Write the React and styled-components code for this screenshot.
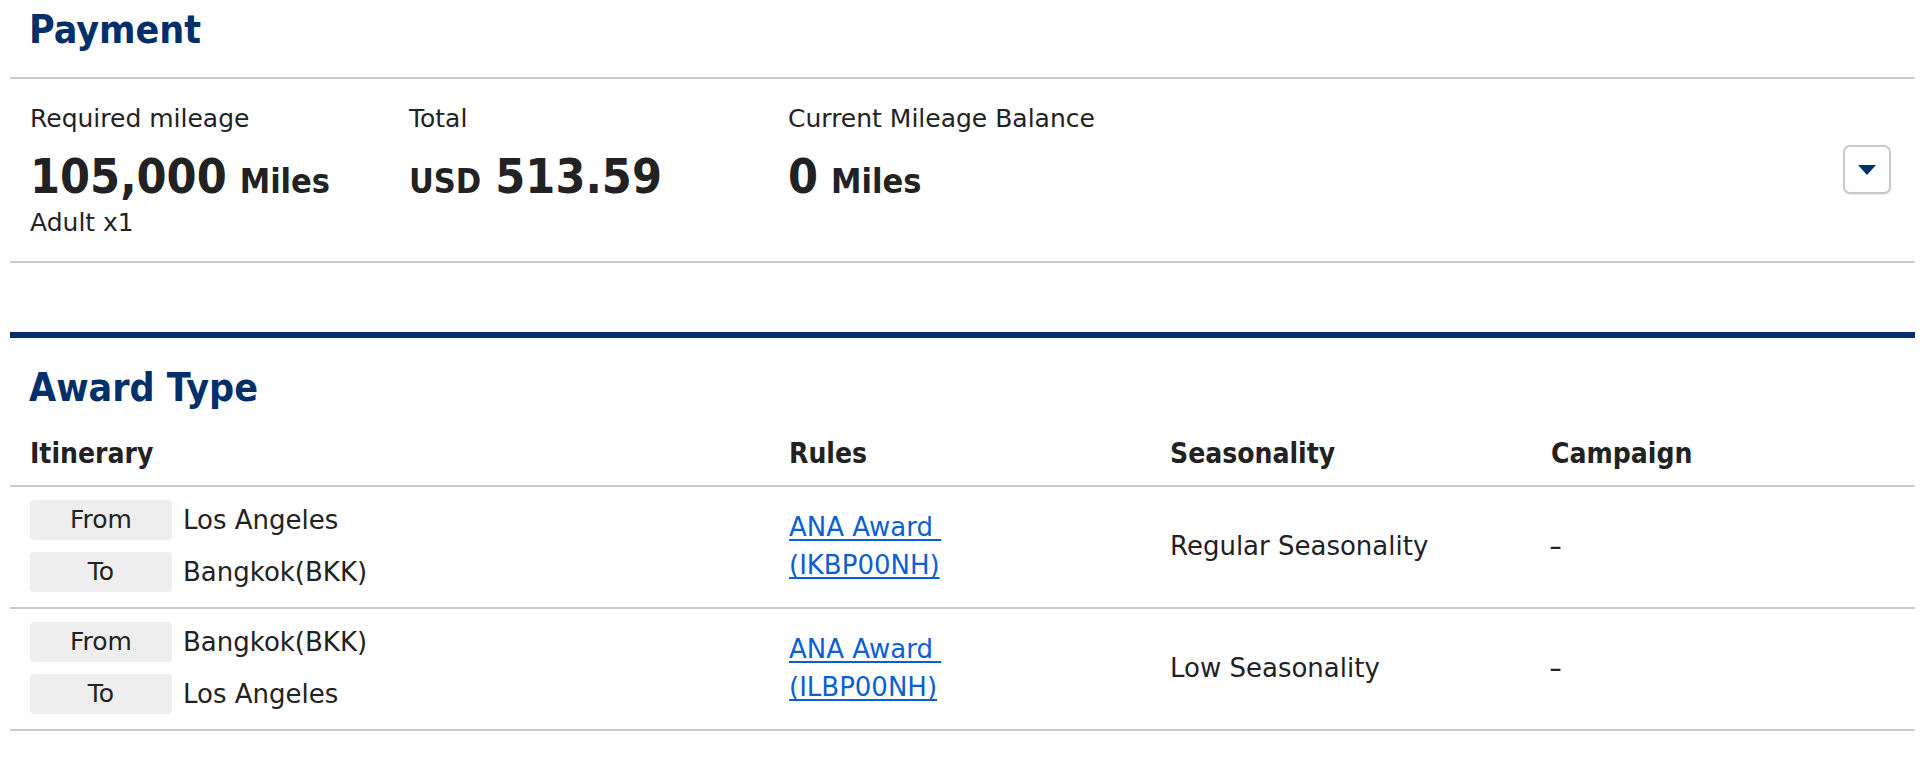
import React from "react";
import styled, { createGlobalStyle } from "styled-components";

const GlobalStyle = createGlobalStyle`
  html, body {
    margin: 0;
    padding: 0;
    background: #ffffff;
  }
  body {
    font-family: "DejaVu Sans", "Liberation Sans", sans-serif;
    color: #222222;
  }
  * { box-sizing: border-box; }
`;

const NAVY = "#00306a";
const BOLD = `"DejaVu Sans Condensed", "DejaVu Sans", "Liberation Sans", sans-serif`;

const Page = styled.div`
  width: 1905px;
  margin-left: 10px;
`;

const SectionTitle = styled.h2`
  margin: 0;
  padding: ${(p) => (p.$top ? `${p.$top}px` : "0")} 0 0 19px;
  font-family: ${BOLD};
  font-stretch: condensed;
  font-weight: 700;
  font-size: 39px;
  line-height: 56px;
  color: ${NAVY};
`;

const PaymentSection = styled.section`
  padding-top: 2px;
`;

const PaymentBox = styled.div`
  margin-top: 19px;
  border-top: 2px solid #cccccc;
  border-bottom: 2px solid #cccccc;
  display: flex;
  align-items: center;
  padding: 24px 24px 22px 0;
`;

const PayColumns = styled.div`
  display: grid;
  grid-template-columns: 379px 379px 381px;
  flex: 1;
`;

const PayCol = styled.div`
  padding-left: 20px;
`;

const PayLabel = styled.div`
  margin-top: ${(p) => (p.$sub ? "3px" : "0")};
  font-size: 25px;
  line-height: 32px;
  color: #222222;
`;

const PayValue = styled.div`
  margin-top: 13px;
  font-family: ${BOLD};
  font-stretch: condensed;
  font-weight: 700;
  font-size: 48px;
  line-height: 56px;
  color: #222222;
  white-space: nowrap;
`;

const Unit = styled.span`
  font-size: 34px;
  line-height: 1;
  margin: ${(p) => (p.$before ? "0 14px 0 0" : "0 0 0 13px")};
`;

const ToggleButton = styled.button`
  width: 48px;
  height: 49px;
  margin-top: -3px;
  border: 2px solid #c9c9c9;
  border-radius: 7px;
  background: #ffffff;
  display: flex;
  align-items: center;
  justify-content: center;
  padding: 0;
  cursor: pointer;
  box-shadow: 0 1px 1px rgba(0, 0, 0, 0.08);
`;

const AwardSection = styled.section`
  margin-top: 69px;
  border-top: 6px solid ${NAVY};
`;

const Table = styled.div`
  display: grid;
  grid-template-columns: 759px 381px 381px 384px;
`;

const HeadCell = styled.div`
  padding: 18px 0 11px 20px;
  font-family: ${BOLD};
  font-stretch: condensed;
  font-weight: 700;
  font-size: 28px;
  line-height: 40px;
  color: #222222;
  border-bottom: 2px solid #cccccc;
`;

const Cell = styled.div`
  padding: 13px 0 15px 20px;
  border-bottom: 2px solid #cccccc;
  display: flex;
  align-items: center;
  font-size: 26px;
  line-height: 38px;
  color: #222222;
`;

const Legs = styled.div`
  display: flex;
  flex-direction: column;
  gap: 12px;
`;

const Leg = styled.div`
  display: flex;
  align-items: center;
  gap: 11px;
`;

const Badge = styled.span`
  width: 142px;
  height: 40px;
  border-radius: 4px;
  background: #eeeeee;
  font-size: 25px;
  line-height: 40px;
  text-align: center;
  color: #222222;
`;

const City = styled.span`
  font-size: 26px;
  line-height: 40px;
`;

const RuleLink = styled.a`
  color: #0a5fd6;
  text-decoration: underline;
  text-underline-offset: 3px;
  text-decoration-thickness: 2px;
  font-size: 26px;
  line-height: 38px;
`;

const Dash = styled.span`
  display: inline-block;
  transform: scaleX(1.4);
`;

const Caret = () => (
  <svg width="18" height="10" viewBox="0 0 18 10" aria-hidden="true">
    <path d="M0 0 H18 L9 10 Z" fill={NAVY} />
  </svg>
);

const rows = [
  {
    from: "Los Angeles",
    to: "Bangkok(BKK)",
    code: "(IKBP00NH)",
    season: "Regular Seasonality",
  },
  {
    from: "Bangkok(BKK)",
    to: "Los Angeles",
    code: "(ILBP00NH)",
    season: "Low Seasonality",
  },
];

export default function App() {
  return (
    <>
      <GlobalStyle />
      <Page>
        <PaymentSection>
          <SectionTitle>Payment</SectionTitle>
          <PaymentBox>
            <PayColumns>
              <PayCol>
                <PayLabel>Required mileage</PayLabel>
                <PayValue>
                  105,000<Unit>Miles</Unit>
                </PayValue>
                <PayLabel $sub>Adult x1</PayLabel>
              </PayCol>
              <PayCol>
                <PayLabel>Total</PayLabel>
                <PayValue>
                  <Unit $before>USD</Unit>513.59
                </PayValue>
                <PayLabel $sub>&nbsp;</PayLabel>
              </PayCol>
              <PayCol>
                <PayLabel>Current Mileage Balance</PayLabel>
                <PayValue>
                  0<Unit>Miles</Unit>
                </PayValue>
                <PayLabel $sub>&nbsp;</PayLabel>
              </PayCol>
            </PayColumns>
            <ToggleButton aria-label="Show details">
              <Caret />
            </ToggleButton>
          </PaymentBox>
        </PaymentSection>

        <AwardSection>
          <SectionTitle $top={22}>Award Type</SectionTitle>
          <Table>
            <HeadCell>Itinerary</HeadCell>
            <HeadCell>Rules</HeadCell>
            <HeadCell>Seasonality</HeadCell>
            <HeadCell>Campaign</HeadCell>
            {rows.map((r) => (
              <React.Fragment key={r.code}>
                <Cell>
                  <Legs>
                    <Leg>
                      <Badge>From</Badge>
                      <City>{r.from}</City>
                    </Leg>
                    <Leg>
                      <Badge>To</Badge>
                      <City>{r.to}</City>
                    </Leg>
                  </Legs>
                </Cell>
                <Cell>
                  <RuleLink href="#">
                    ANA Award&nbsp;
                    <br />
                    {r.code}
                  </RuleLink>
                </Cell>
                <Cell>{r.season}</Cell>
                <Cell>
                  <Dash>-</Dash>
                </Cell>
              </React.Fragment>
            ))}
          </Table>
        </AwardSection>
      </Page>
    </>
  );
}
